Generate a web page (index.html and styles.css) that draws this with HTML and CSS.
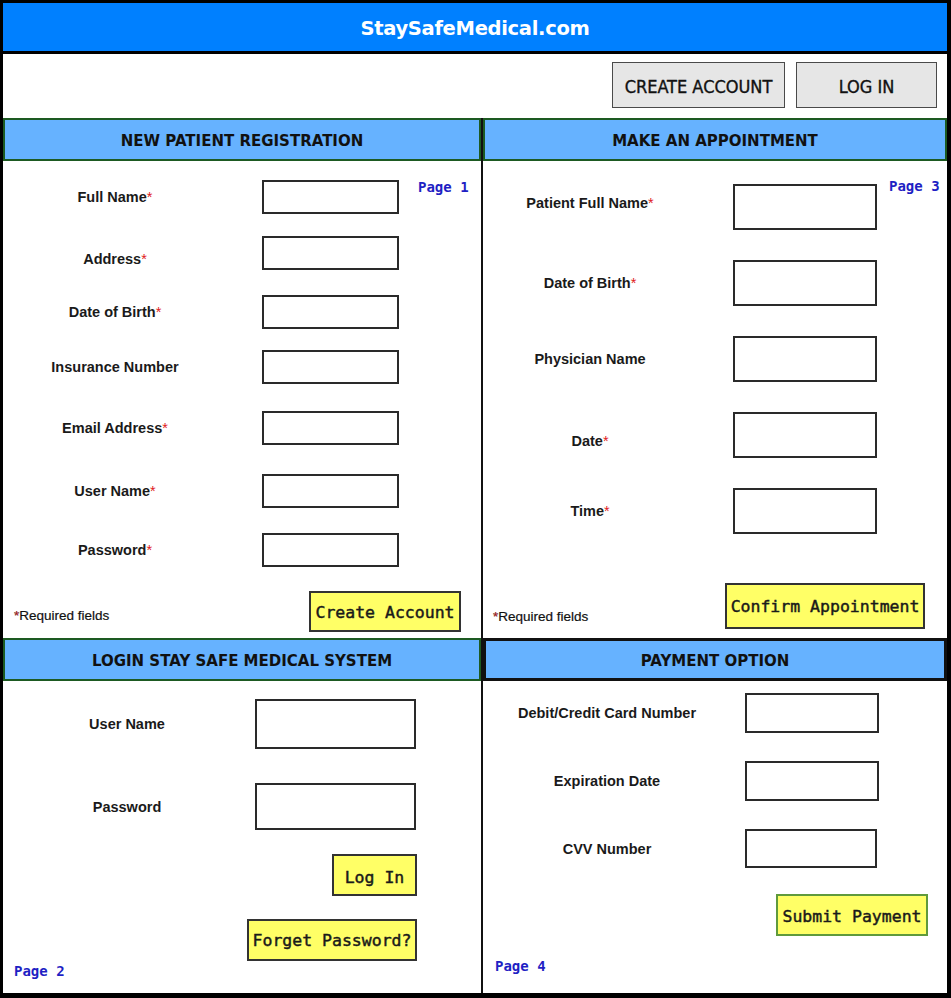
FILE: index.html
```html
<!DOCTYPE html>
<html lang="en">
<head>
<meta charset="utf-8">
<title>StaySafeMedical.com</title>
<link rel="stylesheet" href="styles.css">
</head>
<body>
<div class="frame">
  <header class="brand">StaySafeMedical.com</header>
  <nav class="topbar">
    <button class="nav-btn nav-create">CREATE ACCOUNT</button>
    <button class="nav-btn nav-login">LOG IN</button>
  </nav>
  <main class="grid">
    <section class="panel panel-left reg">
      <h2 class="panel-head head-green">NEW PATIENT REGISTRATION</h2>
      <div class="panel-body">
        <div class="field"><label class="lbl">Full Name<span class="req">*</span></label><span class="box"></span><span class="page-tag">Page 1</span></div>
        <div class="field"><label class="lbl lbl-low">Address<span class="req">*</span></label><span class="box"></span></div>
        <div class="field"><label class="lbl">Date of Birth<span class="req">*</span></label><span class="box"></span></div>
        <div class="field"><label class="lbl">Insurance Number</label><span class="box"></span></div>
        <div class="field"><label class="lbl">Email Address<span class="req">*</span></label><span class="box"></span></div>
        <div class="field"><label class="lbl">User Name<span class="req">*</span></label><span class="box"></span></div>
        <div class="field"><label class="lbl">Password<span class="req">*</span></label><span class="box"></span></div>
        <div class="panel-foot">
          <span class="note"><span class="req">*</span>Required fields</span>
          <button class="action">Create Account</button>
        </div>
      </div>
    </section>

    <section class="panel appt">
      <h2 class="panel-head head-green">MAKE AN APPOINTMENT</h2>
      <div class="panel-body">
        <div class="field"><label class="lbl lbl-high">Patient Full Name<span class="req">*</span></label><span class="box"></span><span class="page-tag">Page 3</span></div>
        <div class="field"><label class="lbl">Date of Birth<span class="req">*</span></label><span class="box"></span></div>
        <div class="field"><label class="lbl">Physician Name</label><span class="box"></span></div>
        <div class="field"><label class="lbl lbl-low">Date<span class="req">*</span></label><span class="box"></span></div>
        <div class="field"><label class="lbl">Time<span class="req">*</span></label><span class="box"></span></div>
        <div class="panel-foot">
          <span class="note"><span class="req">*</span>Required fields</span>
          <button class="action">Confirm Appointment</button>
        </div>
      </div>
    </section>

    <section class="panel panel-left login">
      <h2 class="panel-head head-green">LOGIN STAY SAFE MEDICAL SYSTEM</h2>
      <div class="panel-body">
        <div class="field"><label class="lbl">User Name</label><span class="box"></span></div>
        <div class="field"><label class="lbl">Password</label><span class="box"></span></div>
        <div class="actions">
          <button class="action btn-login">Log In</button>
          <button class="action btn-forgot">Forget Password?</button>
        </div>
        <span class="page-tag page-foot">Page 2</span>
      </div>
    </section>

    <section class="panel pay">
      <h2 class="panel-head head-black">PAYMENT OPTION</h2>
      <div class="panel-body">
        <div class="field"><label class="lbl">Debit/Credit Card Number</label><span class="box"></span></div>
        <div class="field"><label class="lbl">Expiration Date</label><span class="box"></span></div>
        <div class="field"><label class="lbl">CVV Number</label><span class="box"></span></div>
        <div class="actions">
          <button class="action btn-submit">Submit Payment</button>
        </div>
        <span class="page-tag page-foot">Page 4</span>
      </div>
    </section>
  </main>
</div>
</body>
</html>
```

FILE: styles.css
```css
* { box-sizing: border-box; }

html, body {
  margin: 0;
  padding: 0;
  background: #ffffff;
}

.frame {
  width: 951px;
  height: 998px;
  border-style: solid;
  border-color: #000;
  border-width: 3px 4px 5px 3px;
  display: flex;
  flex-direction: column;
  overflow: hidden;
  font-family: "Liberation Sans", Arial, sans-serif;
  color: #111;
}

/* ---------- brand bar ---------- */
.brand {
  height: 51px;
  flex: 0 0 51px;
  background: #0080ff;
  border-bottom: 3px solid #000;
  color: #fff;
  font-family: "Comic Sans MS", "DejaVu Sans", sans-serif;
  font-weight: bold;
  font-size: 19.5px;
  letter-spacing: -0.3px;
  display: flex;
  align-items: center;
  justify-content: center;
  padding-top: 3px;
}

/* ---------- top nav ---------- */
.topbar {
  height: 64px;
  flex: 0 0 64px;
  display: flex;
  justify-content: flex-end;
  align-items: flex-start;
  gap: 11px;
  padding: 8px 10px 0 0;
}

.nav-btn {
  height: 46px;
  background: #e6e6e6;
  border: 1px solid #4a4a4a;
  font-family: "Liberation Sans Narrow", "DejaVu Sans Condensed", "Liberation Sans", sans-serif;
  font-stretch: condensed;
  font-size: 18px;
  color: #111;
  -webkit-text-stroke: 0.35px #111;
  padding: 2px 0 0;
  margin: 0;
}

.nav-create { width: 173px; }
.nav-login { width: 141px; }

/* ---------- grid ---------- */
.grid {
  flex: 1 1 auto;
  display: grid;
  grid-template-columns: 480px 464px;
  grid-template-rows: 520px 355px;
}

.panel {
  display: flex;
  flex-direction: column;
  min-height: 0;
}

.panel-left {
  border-right: 2px solid #111;
}

.panel-head {
  margin: 0;
  height: 43px;
  flex: 0 0 43px;
  background: #66b2ff;
  display: flex;
  align-items: center;
  justify-content: center;
  padding-top: 3px;
  font-family: "DejaVu Sans", Verdana, sans-serif;
  font-weight: bold;
  font-size: 15px;
  color: #111;
}

.head-green { border: 2px solid #1d5a22; }
.head-black { border: 3px solid #111; }

.panel-body {
  flex: 1 1 auto;
  display: flex;
  flex-direction: column;
}

.field {
  display: flex;
  align-items: center;
}

.lbl {
  text-align: center;
  font-size: 14.5px;
  font-weight: bold;
  color: #1a1a1a;
}

.lbl-low { position: relative; top: 6px; }
.lbl-high { position: relative; top: -4px; }

.req { color: #e02020; font-weight: normal; }

.box {
  display: block;
  border: 2px solid #2a2a2a;
  background: #fff;
}

.page-tag {
  font-family: "DejaVu Sans Mono", "Liberation Mono", monospace;
  font-weight: bold;
  font-size: 14px;
  line-height: 16px;
  color: #1f1fc4;
  align-self: flex-start;
}

.note {
  font-size: 13.5px;
  color: #111;
  line-height: 16px;
  -webkit-text-stroke: 0.2px #111;
}

.action {
  margin: 0;
  padding: 0;
  background: #ffff66;
  border: 2px solid #333;
  font-family: "DejaVu Sans Mono", "Liberation Mono", monospace;
  font-weight: normal;
  -webkit-text-stroke: 0.45px #1a1a1a;
  font-size: 16.5px;
  color: #1a1a1a;
  display: flex;
  align-items: center;
  justify-content: center;
}

.panel-foot {
  display: flex;
  justify-content: space-between;
  align-items: flex-end;
}

/* ---------- registration ---------- */
.reg .panel-body { padding-top: 19px; }
.reg .lbl { width: 224px; }
.reg .box { width: 137px; height: 34px; margin-left: 35px; }
.reg .page-tag { margin-left: 19px; margin-top: -1px; }
.reg .field:nth-child(2) { margin-top: 22px; }
.reg .field:nth-child(3) { margin-top: 25px; }
.reg .field:nth-child(4) { margin-top: 21px; }
.reg .field:nth-child(5) { margin-top: 27px; }
.reg .field:nth-child(6) { margin-top: 29px; }
.reg .field:nth-child(7) { margin-top: 25px; }
.reg .panel-foot { margin-top: 24px; padding: 0 20px 0 11px; }
.reg .note { padding-bottom: 8px; }
.reg .action { width: 152px; height: 41px; padding-top: 2px; }

/* ---------- appointment ---------- */
.appt .panel-body { padding-top: 23px; }
.appt .lbl { width: 214px; }
.appt .box { width: 144px; height: 46px; margin-left: 36px; }
.appt .field + .field { margin-top: 30px; }
.appt .page-tag { margin-left: 12px; margin-top: -6px; }
.appt .panel-foot { margin-top: 49px; padding: 0 22px 0 10px; }
.appt .note { padding-bottom: 4px; }
.appt .action { width: 200px; height: 46px; }

/* ---------- login ---------- */
.login .panel-body { padding-top: 18px; }
.login .lbl { width: 248px; }
.login .box { width: 161px; height: 50px; margin-left: 4px; }
.login .field + .field { margin-top: 34px; }
.login .field + .field .box { height: 47px; }
.login .actions {
  display: flex;
  flex-direction: column;
  align-items: flex-end;
  gap: 23px;
  margin-top: 24px;
  padding-right: 64px;
}
.btn-login { width: 85px; height: 42px; padding-top: 4px; }
.btn-forgot { width: 170px; height: 42px; }
.login .page-foot { margin: 2px 0 0 11px; }

/* ---------- payment ---------- */
.pay .panel-body { padding-top: 12px; }
.pay .lbl { width: 248px; }
.pay .box { width: 134px; height: 40px; margin-left: 14px; }
.pay .field + .field { margin-top: 28px; }
.pay .field:nth-child(3) .box { width: 132px; height: 39px; }
.pay .actions {
  display: flex;
  justify-content: flex-end;
  margin-top: 26px;
  padding-right: 19px;
}
.btn-submit { width: 152px; height: 42px; border-color: #5f9a3c; padding-top: 3px; }
.pay .page-foot { margin: 22px 0 0 12px; }
```
